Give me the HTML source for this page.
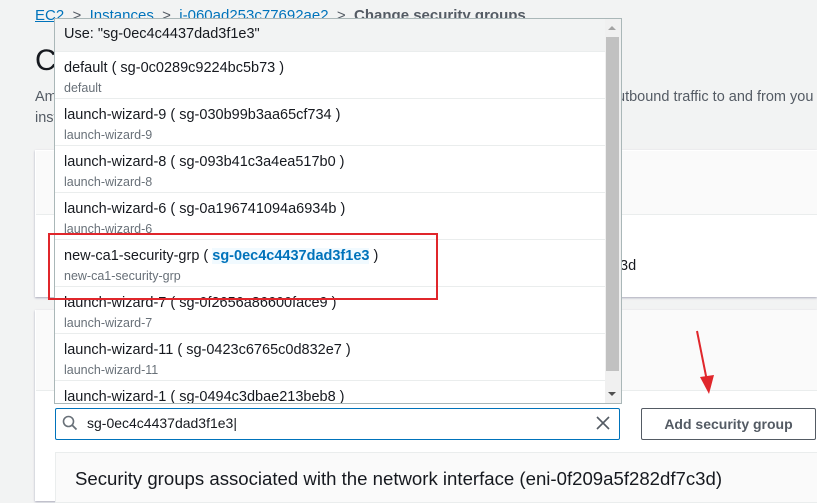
<!DOCTYPE html><html><head><style>
body{margin:0;width:817px;height:501px;overflow:hidden;background:#f2f3f3;font-family:"Liberation Sans",sans-serif;position:relative;color:#16191f}
.a{position:absolute}
.row{position:absolute;left:0;width:550px;height:46px;border-bottom:1px solid #eaeded;background:#fff}
.row .t{position:absolute;left:9px;top:8px;font-size:14.5px;color:#16191f;white-space:nowrap}
.row .s{position:absolute;left:9px;top:29px;font-size:12.5px;color:#687078;white-space:nowrap}
</style></head><body>
<div class="a" style="left:35px;top:7px;font-size:15px;color:#545b64;white-space:nowrap"><span style="color:#0073bb;text-decoration:underline">EC2</span> &nbsp;&gt;&nbsp; <span style="color:#0073bb;text-decoration:underline">Instances</span> &nbsp;&gt;&nbsp; <span style="color:#0073bb;text-decoration:underline">i-060ad253c77692ae2</span> &nbsp;&gt;&nbsp; <b>Change security groups</b></div>
<div class="a" style="left:35px;top:44px;font-size:30px">Ch</div>
<div class="a" style="left:35px;top:89px;font-size:14.5px;color:#545b64">Am</div>
<div class="a" style="left:35px;top:110px;font-size:14.5px;color:#545b64">inst</div>
<div class="a" style="left:617px;top:89px;font-size:14.5px;color:#545b64;white-space:nowrap">utbound traffic to and from you</div>
<div class="a" style="left:35px;top:150px;width:782px;height:147px;background:#fff;box-shadow:0 1px 2px #aab"></div>
<div class="a" style="left:36px;top:151px;width:781px;height:63px;background:#fafafa;border-bottom:1px solid #eaeded"></div>
<div class="a" style="left:620px;top:258px;font-size:14.5px">3d</div>
<div class="a" style="left:35px;top:310px;width:782px;height:191px;background:#fff;box-shadow:0 1px 2px #aab"></div>
<div class="a" style="left:36px;top:310px;width:781px;height:80px;background:#fafafa;border-bottom:1px solid #eaeded"></div>
<div class="a" style="left:55px;top:408px;width:563px;height:30px;border:1px solid #0073bb;background:#fff;border-radius:2px"></div>
<svg class="a" style="left:62px;top:415px" width="16" height="16"><circle cx="6.5" cy="6.5" r="5" fill="none" stroke="#687078" stroke-width="1.6"/><path d="M10 10l4.5 4.5" stroke="#687078" stroke-width="1.8"/></svg>
<div class="a" style="left:87px;top:415px;font-size:14px">sg-0ec4c4437dad3f1e3|</div>
<svg class="a" style="left:596px;top:416px" width="14" height="14"><path d="M1 1l12 12M13 1L1 13" stroke="#545b64" stroke-width="1.6"/></svg>
<div class="a" style="left:641px;top:408px;width:173px;height:30px;border:1px solid #545b64;background:#fff;border-radius:2px;text-align:center;line-height:30px;font-size:14px;font-weight:bold;color:#545b64">Add security group</div>
<div class="a" style="left:55px;top:452px;width:762px;height:49px;background:#fafafa;border:1px solid #eaeded"></div>
<div class="a" style="left:75px;top:468px;font-size:18.6px;white-space:nowrap">Security groups associated with the network interface (eni-0f209a5f282df7c3d)</div>
<div class="a" style="left:54px;top:18px;width:566px;height:384px;background:#fff;border:1px solid #aab7b8;overflow:hidden">
<div class="a" style="left:0;top:0;width:550px;height:32px;background:#f2f3f3;border-bottom:1px solid #eaeded"><div class="a" style="left:9px;top:7px;font-size:14.5px">Use: "sg-0ec4c4437dad3f1e3"</div></div>
<div class="row" style="top:33px"><div class="t">default ( sg-0c0289c9224bc5b73 )</div><div class="s">default</div></div>
<div class="row" style="top:80px"><div class="t">launch-wizard-9 ( sg-030b99b3aa65cf734 )</div><div class="s">launch-wizard-9</div></div>
<div class="row" style="top:127px"><div class="t">launch-wizard-8 ( sg-093b41c3a4ea517b0 )</div><div class="s">launch-wizard-8</div></div>
<div class="row" style="top:174px"><div class="t">launch-wizard-6 ( sg-0a196741094a6934b )</div><div class="s">launch-wizard-6</div></div>
<div class="row" style="top:221px"><div class="t">new-ca1-security-grp ( <b style="color:#0073bb;background:#f1faff">sg-0ec4c4437dad3f1e3</b> )</div><div class="s">new-ca1-security-grp</div></div>
<div class="row" style="top:268px"><div class="t">launch-wizard-7 ( sg-0f2656a86600face9 )</div><div class="s">launch-wizard-7</div></div>
<div class="row" style="top:315px"><div class="t">launch-wizard-11 ( sg-0423c6765c0d832e7 )</div><div class="s">launch-wizard-11</div></div>
<div class="row" style="top:362px"><div class="t">launch-wizard-1 ( sg-0494c3dbae213beb8 )</div></div>
<div class="a" style="left:550px;top:0;width:16px;height:384px;background:#f0f0f0"></div>
<div class="a" style="left:551px;top:18px;width:13px;height:334px;background:#c1c1c1"></div>
<div class="a" style="left:553px;top:7px;width:0;height:0;border:4px solid transparent;border-bottom:4px solid #a3a3a3;border-top:0"></div>
<div class="a" style="left:553px;top:373px;width:0;height:0;border:4px solid transparent;border-top:4px solid #505050;border-bottom:0"></div>
</div>
<div class="a" style="left:48px;top:233px;width:386px;height:63px;border:2.5px solid #e0262b"></div>
<svg class="a" style="left:680px;top:325px" width="50" height="75"><path d="M17 6L27 56" stroke="#e0262b" stroke-width="2"/><path d="M20 52L29 69L34 50Z" fill="#e0262b"/></svg>
</body></html>
